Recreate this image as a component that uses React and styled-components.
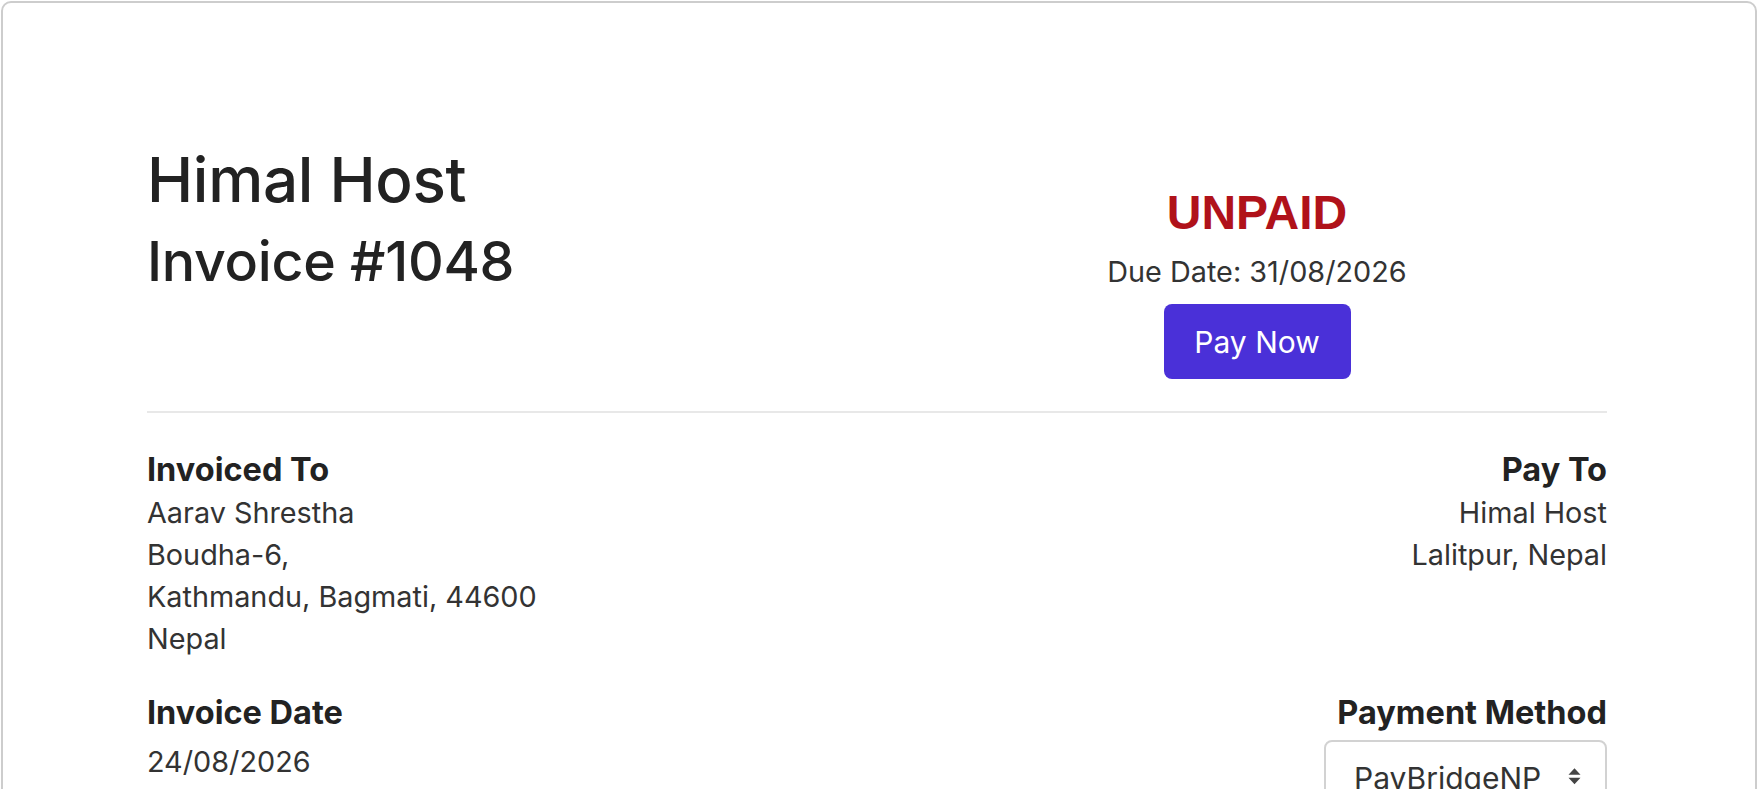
import React from "react";
import styled, { createGlobalStyle } from "styled-components";

const GlobalStyle = createGlobalStyle`
html, body {
    margin: 0;
    padding: 0;
    overflow: hidden;
    background: #fff;
}
body {
    font-family: Inter, "Noto Sans", sans-serif;
    color: #333;
}
* {
    box-sizing: border-box;
}
`;

const invoice = {
    company: "Himal Host",
    number: 1048,
    status: "Unpaid",
    dueDate: "31/08/2026",
    invoiceDate: "24/08/2026",
    invoicedTo: ["Aarav Shrestha", "Boudha-6,", "Kathmandu, Bagmati, 44600", "Nepal"],
    payTo: ["Himal Host", "Lalitpur, Nepal"],
    methods: ["PayBridgeNP", "Bank Transfer", "eSewa"],
};

const ArrowsIcon = () => (
    <svg width="15" height="17" viewBox="0 0 15 17">
        <path d="M7.5 0.5 L13.5 7 L1.5 7 Z" fill="#444" />
        <path d="M7.5 16.5 L13.5 10 L1.5 10 Z" fill="#444" />
    </svg>
);

const App = () => {
    const [method, setMethod] = React.useState(invoice.methods[0]);

    return (
        <Page>
            <GlobalStyle />
            <Card>
                <Header>
                    <div>
                        <Company>{invoice.company}</Company>
                        <Number>Invoice #{invoice.number}</Number>
                    </div>
                    <StatusCol>
                        <Status>{invoice.status}</Status>
                        <DueDate>Due Date: {invoice.dueDate}</DueDate>
                        <PayButton>Pay Now</PayButton>
                    </StatusCol>
                </Header>

                <Divider />

                <InfoGrid>
                    <Block>
                        <Label>Invoiced To</Label>
                        <Address>
                            {invoice.invoicedTo.map((line) => (
                                <Line key={line}>{line}</Line>
                            ))}
                        </Address>
                    </Block>
                    <Block right>
                        <Label>Pay To</Label>
                        <Address>
                            {invoice.payTo.map((line) => (
                                <Line key={line}>{line}</Line>
                            ))}
                        </Address>
                    </Block>

                    <Block>
                        <Label>Invoice Date</Label>
                        <Value>{invoice.invoiceDate}</Value>
                    </Block>
                    <Block right>
                        <Label>Payment Method</Label>
                        <SelectWrap>
                            <Select value={method} onChange={(e) => setMethod(e.target.value)}>
                                {invoice.methods.map((m) => (
                                    <option key={m}>{m}</option>
                                ))}
                            </Select>
                            <SelectArrows>
                                <ArrowsIcon />
                            </SelectArrows>
                        </SelectWrap>
                    </Block>
                </InfoGrid>
            </Card>
        </Page>
    );
};

export default App;

const Page = styled.div`
padding: 1px;
`;

const Card = styled.div`
border: 2px solid #cdcdcd;
border-radius: 10px;
padding: 143px 148px 0 144px;
min-height: 900px;
background: #fff;
`;

const Header = styled.div`
display: grid;
grid-template-columns: 1fr 1fr;
column-gap: 60px;
`;

const Company = styled.h2`
margin: 0;
font-size: 62px;
line-height: 68px;
font-weight: 500;
color: #222;
letter-spacing: -0.3px;
`;

const Number = styled.h3`
margin: 17px 0 0;
font-size: 55.5px;
line-height: 60px;
font-weight: 500;
color: #222;
letter-spacing: -0.3px;
`;

const StatusCol = styled.div`
padding-top: 40px;
text-align: center;
`;

const Status = styled.div`
font-family: "Liberation Sans", Arial, sans-serif;
font-size: 48px;
line-height: 54px;
font-weight: 700;
text-transform: uppercase;
color: #b0121a;
`;

const DueDate = styled.div`
margin-top: 11px;
font-size: 28.8px;
line-height: 41px;
color: #333;
`;

const PayButton = styled.button`
margin-top: 12px;
width: 187px;
height: 75px;
border: none;
border-radius: 8px;
background: #4a30d8;
color: #fff;
font-family: Inter, "Noto Sans", sans-serif;
font-size: 30px;
cursor: pointer;
`;

const Divider = styled.hr`
margin: 32px 0 35px;
border: none;
height: 2px;
background: #e8e8e8;
`;

const InfoGrid = styled.div`
display: grid;
grid-template-columns: 1fr 1fr;
column-gap: 60px;
row-gap: 31px;
align-items: start;
`;

const Block = styled.div`
text-align: ${(props) => (props.right ? "right" : "left")};
`;

const Label = styled.div`
font-size: 32.5px;
line-height: 44px;
font-weight: 700;
color: #222;
`;

const Address = styled.div`
font-size: 28.8px;
line-height: 42px;
color: #333;
`;

const Line = styled.div``;

const Value = styled.div`
margin-top: 6px;
font-size: 28.8px;
line-height: 42px;
color: #333;
`;

const SelectWrap = styled.div`
position: relative;
display: inline-block;
margin-top: 5px;
`;

const Select = styled.select`
appearance: none;
-webkit-appearance: none;
width: 283px;
height: 75px;
padding: 0 60px 0 28px;
border: 2px solid #d2d2d2;
border-radius: 8px;
background: #fff;
color: #333;
font-family: Inter, "Noto Sans", sans-serif;
font-size: 30px;
outline: none;
`;

const SelectArrows = styled.span`
position: absolute;
right: 25px;
top: 50%;
transform: translateY(-60%);
display: flex;
pointer-events: none;
`;
